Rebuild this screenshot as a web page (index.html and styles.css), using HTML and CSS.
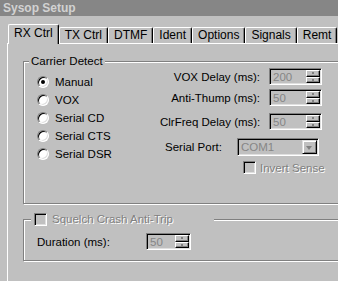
FILE: index.html
```html
<!DOCTYPE html>
<html>
  <head>
    <title>Sysop Setup</title>
    <link rel="stylesheet" href="styles.css">
  </head>
  <body>
    <div class="titlebar">Sysop Setup</div>
    <div class="dialog">
      <div class="tabs">
        <div class="tab active">RX Ctrl</div>
        <div class="tab">TX Ctrl</div>
        <div class="tab">DTMF</div>
        <div class="tab">Ident</div>
        <div class="tab">Options</div>
        <div class="tab">Signals</div>
        <div class="tab">Remt</div>
      </div>

      <div class="page">
        <fieldset class="group carrier">
          <legend>Carrier Detect</legend>
          <div class="carrier-body">
            <div class="radios">
              <div class="radio-row"><span class="radio checked"></span>Manual</div>
              <div class="radio-row"><span class="radio"></span>VOX</div>
              <div class="radio-row"><span class="radio"></span>Serial CD</div>
              <div class="radio-row"><span class="radio"></span>Serial CTS</div>
              <div class="radio-row"><span class="radio"></span>Serial DSR</div>
            </div>

            <div class="fields">
              <div class="field vox">
                <span class="field-label">VOX Delay (ms):</span>
                <div class="spin">
                  <span class="value">200</span>
                  <div class="spin-btns"><span class="spin-btn up"></span><span class="spin-btn down"></span></div>
                </div>
              </div>
              <div class="field thump">
                <span class="field-label">Anti-Thump (ms):</span>
                <div class="spin">
                  <span class="value">50</span>
                  <div class="spin-btns"><span class="spin-btn up"></span><span class="spin-btn down"></span></div>
                </div>
              </div>
              <div class="field clrfreq">
                <span class="field-label">ClrFreq Delay (ms):</span>
                <div class="spin">
                  <span class="value">50</span>
                  <div class="spin-btns"><span class="spin-btn up"></span><span class="spin-btn down"></span></div>
                </div>
              </div>
              <div class="field port">
                <span class="port-label">Serial Port:</span>
                <div class="combo">
                  <span class="value">COM1</span>
                  <span class="combo-btn"></span>
                </div>
              </div>
              <div class="check-row invert">
                <span class="check"></span>
                <span class="disabled">Invert Sense</span>
              </div>
            </div>
          </div>
        </fieldset>

        <fieldset class="group squelch">
          <legend>
            <span class="check"></span>
            <span class="disabled">Squelch Crash Anti-Trip</span>
          </legend>
          <div class="duration">
            <span class="duration-label">Duration (ms):</span>
            <div class="spin short">
              <span class="value">50</span>
              <div class="spin-btns"><span class="spin-btn up"></span><span class="spin-btn down"></span></div>
            </div>
          </div>
        </fieldset>
      </div>
    </div>
  </body>
</html>
```

FILE: styles.css
```css
body {
  margin: 0;
  width: 338px;
  height: 281px;
  overflow: hidden;
  background-color: #c0c0c0;
  font-family: "Liberation Sans", Arial, sans-serif;
  font-size: 11.5px;
  color: #000;
}

.titlebar {
  height: 16px;
  line-height: 16px;
  padding-left: 3px;
  background-color: #868686;
  color: #d2d2d2;
  font-size: 12px;
  font-weight: bold;
}

.dialog {
  padding-top: 8px;
}

/* tab strip */
.tabs {
  display: flex;
  align-items: flex-end;
  height: 19px;
  margin-left: 8px;
}

.tab {
  flex-shrink: 0;
  height: 16px;
  box-sizing: border-box;
  padding: 0 5px;
  border-top: 1px solid #fff;
  border-left: 1px solid #fff;
  border-right: 1px solid #000;
  border-radius: 2px 2px 0 0;
  box-shadow: inset -1px 0 #808080;
  font-size: 12px;
  line-height: 15px;
  white-space: nowrap;
}

.tab.active {
  position: relative;
  z-index: 1;
  height: 20px;
  margin-bottom: -1px;
  background-color: #c0c0c0;
  line-height: 17px;
}

.page {
  width: 340px;
  height: 238px;
  box-sizing: border-box;
  margin-left: 7px;
  border-top: 1px solid #fff;
  border-left: 1px solid #fff;
}

/* etched group boxes */
.group {
  margin: 0 0 0 15px;
  padding: 0;
  min-width: 0;
  border: 1px solid #808080;
  box-shadow: inset 1px 1px #fff, 1px 1px #fff;
}

.group legend {
  margin-left: 5px;
  padding: 0 2px;
  height: 14px;
  line-height: 14px;
  background-color: #c0c0c0;
}

.carrier {
  margin-top: 10px;
}

.carrier-body {
  display: flex;
  height: 135px;
}

.radios {
  width: 123px;
  padding: 5px 0 0 13px;
}

.radio-row {
  display: flex;
  align-items: center;
  height: 18px;
}

.radio {
  position: relative;
  width: 12px;
  height: 12px;
  box-sizing: border-box;
  margin-right: 6px;
  border: 1px solid;
  border-color: #808080 #fff #fff #808080;
  border-radius: 50%;
  background-color: #fff;
  box-shadow: inset 1px 1px #000, inset -1px -1px #dfdfdf;
}

.radio.checked::after {
  content: "";
  position: absolute;
  left: 3px;
  top: 3px;
  width: 4px;
  height: 4px;
  border-radius: 50%;
  background-color: #000;
}

.fields {
  display: flex;
  flex-direction: column;
}

.field {
  display: flex;
  align-items: center;
  height: 17px;
}

.field-label {
  width: 100px;
  text-align: right;
  white-space: nowrap;
}

.thump { margin-top: 4px; }
.clrfreq { margin-top: 7px; }

.port {
  height: 18px;
  margin-top: 8px;
}

.port-label {
  width: 72px;
  padding-left: 5px;
}

/* sunken edit boxes */
.spin, .combo {
  display: flex;
  align-items: center;
  box-sizing: border-box;
  padding: 1px;
  border: 1px solid;
  border-color: #808080 #fff #fff #808080;
  box-shadow: inset 1px 1px #000, inset -1px -1px #dfdfdf;
  color: #868686;
}

.spin {
  width: 53px;
  height: 17px;
  margin-left: 9px;
}

.spin.short {
  width: 45px;
  margin-left: 0;
}

.value {
  padding-left: 2px;
}

.spin-btns {
  display: flex;
  flex-direction: column;
  width: 14px;
  height: 13px;
  margin-left: auto;
}

.spin-btn {
  position: relative;
  flex: 1;
  box-sizing: border-box;
  border: 1px solid;
  border-color: #fff #000 #000 #fff;
  box-shadow: inset -1px -1px #808080;
}

.spin-btn::after {
  content: "";
  position: absolute;
  left: 5px;
  top: 1px;
  width: 2px;
  height: 2px;
  background-color: #808080;
}

.combo {
  width: 82px;
  height: 18px;
}

.combo-btn {
  position: relative;
  width: 15px;
  height: 14px;
  box-sizing: border-box;
  margin-left: auto;
  border: 1px solid;
  border-color: #dfdfdf #000 #000 #dfdfdf;
  box-shadow: inset 1px 1px #fff, inset -1px -1px #808080;
}

.combo-btn::after {
  content: "";
  position: absolute;
  left: 3px;
  top: 5px;
  border-style: solid;
  border-width: 4px 3.5px 0 3.5px;
  border-color: #808080 transparent transparent transparent;
}

/* check boxes */
.check-row {
  display: flex;
  align-items: center;
}

.invert {
  margin: 5px 0 0 83px;
  height: 13px;
}

.check {
  width: 13px;
  height: 13px;
  box-sizing: border-box;
  margin-right: 4px;
  border: 1px solid;
  border-color: #808080 #fff #fff #808080;
  box-shadow: inset 1px 1px #000, inset -1px -1px #dfdfdf;
  background-color: #c0c0c0;
}

.disabled {
  color: #808080;
  text-shadow: 1px 1px #fff;
  white-space: nowrap;
}

.squelch {
  margin-top: 8px;
}

.squelch legend {
  display: flex;
  align-items: center;
  width: 183px;
  box-sizing: border-box;
  margin-left: 7px;
  padding: 0 0 0 3px;
}

.squelch .check {
  margin-right: 5px;
}

.duration {
  display: flex;
  align-items: center;
  height: 17px;
  padding: 7px 0 10px 13px;
}

.duration-label {
  width: 109px;
}
```
